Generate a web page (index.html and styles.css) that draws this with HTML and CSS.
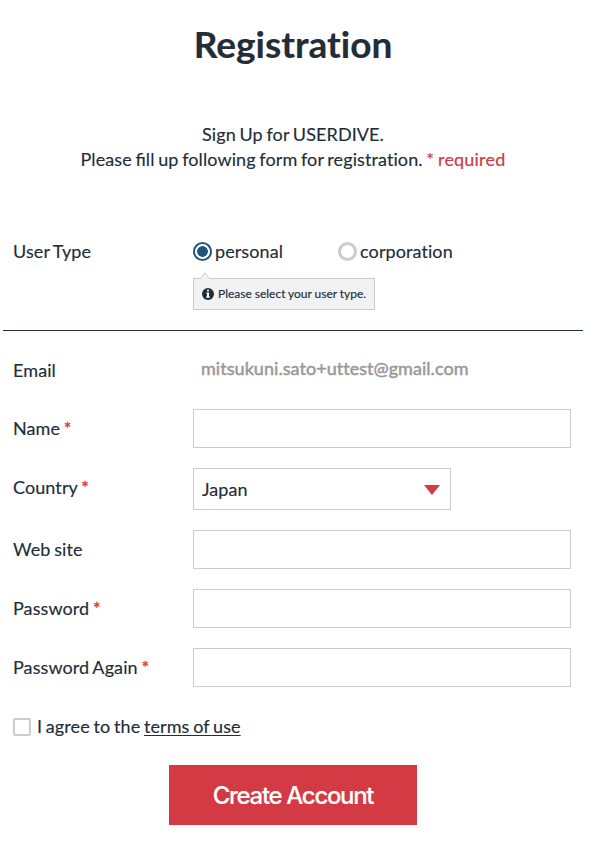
FILE: index.html
```html
<!DOCTYPE html>
<html lang="en">
<head>
<meta charset="utf-8">
<title>Registration</title>
<link rel="stylesheet" href="styles.css">
</head>
<body>
<main class="page">
  <h1 class="title">Registration</h1>
  <p class="intro">Sign Up for USERDIVE.<br>Please <span class="ligature">fi</span>ll up following form for registration. <span class="required note">* required</span></p>
  <form class="form">
    <div class="type-row">
      <span class="label">User Type</span>
      <div class="type-field">
        <div class="radios">
          <label class="choice"><input class="radio" type="radio" name="type" checked><span>personal</span></label>
          <label class="choice"><input class="radio" type="radio" name="type"><span>corporation</span></label>
        </div>
        <div class="hint">
          <svg class="hint-arrow" width="10" height="7" viewBox="0 0 10 7"><path d="M0.5 7L5 .8L9.500 7" fill="#f0f2f3" stroke="#ccc"/></svg>
          <svg class="info" width="12" height="12" viewBox="0 0 12 12"><circle cx="6" cy="6" r="6" fill="#222d38"/><path d="M5 1.700h2v1.600H5zM4.300 4.500H7v4h.8v1.200H4.200V8.500H5V5.700h-.7z" fill="#fff"/></svg>
          <span class="hint-text">Please select your user type.</span>
        </div>
      </div>
    </div>
    <div class="fields">
      <div class="row email-row"><span class="label">Email</span><span class="email">mitsukuni.sato+uttest@gmail.com</span></div>
      <div class="row"><label class="label" for="name">Name <span class="required">*</span></label><input class="input" id="name" type="text"></div>
      <div class="row country-row"><span class="label">Country <span class="required">*</span></span>
        <div class="select"><span>Japan</span><svg class="caret" width="16" height="10" viewBox="0 0 16 10"><path d="M0 0h16L8 10z" fill="#d43a43"/></svg></div></div>
      <div class="row"><label class="label" for="site">Web site</label><input class="input" id="site" type="text"></div>
      <div class="row"><label class="label" for="pw">Password <span class="required">*</span></label><input class="input" id="pw" type="password"></div>
      <div class="row"><label class="label" for="pw2">Password Again <span class="required">*</span></label><input class="input" id="pw2" type="password"></div>
    </div>
    <label class="agree"><input class="checkbox" type="checkbox"><span>I agree to the <a class="terms" href="#">terms of use</a></span></label>
    <button class="submit" type="button">Create Account</button>
  </form>
</main>
</body>
</html>
```
FILE: styles.css
```css
* { box-sizing: border-box; }
body {
  margin: 0;
  background: #fff;
  color: #222d38;
  font: 18px/25px Lato, "Open Sans", sans-serif;
  font-variant-ligatures: none;
  letter-spacing: 0.09px;
  word-spacing: -1px;
  -webkit-text-stroke: 0.15px currentColor;
}
.page { width: 580px; margin-left: 3px; padding-top: 19px; }
.title { margin: 0; font-size: 37px; line-height: 50px; font-weight: 700; text-align: center; letter-spacing: 0; }
.intro { margin: 53px 0 0; text-align: center; }
.ligature { font-variant-ligatures: common-ligatures; letter-spacing: 0; }
.required { color: #d43a43; -webkit-text-stroke-width: 0.4px; }
.note { letter-spacing: 0.2px; -webkit-text-stroke-width: 0.2px; }
.type-row { display: flex; height: 92px; margin-top: 67px; padding-left: 10px; border-bottom: 1px solid #222d38; }
.label { width: 180px; flex: none; }
.radios { display: flex; gap: 55px; }
.choice { display: flex; align-items: center; gap: 3px; white-space: nowrap; }
.radio { appearance: none; flex: none; width: 19px; height: 19px; margin: 0; border: 3px solid #ccc; border-radius: 50%; }
.radio:checked { border: 2px solid #22557c; background: radial-gradient(circle, #22557c 5px, #fff 5.6px); }
.hint { position: relative; display: flex; align-items: center; gap: 4px; width: 182px; height: 32px; margin-top: 14px; padding-left: 8px; border: 1px solid #ccc; background: #f0f2f3; font-size: 12px; letter-spacing: 0; word-spacing: -0.2px; white-space: nowrap; }
.hint-text { padding-bottom: 1px; }
.hint-arrow { position: absolute; left: 6px; top: -7px; }
.fields { display: flex; flex-direction: column; gap: 20px; padding: 27px 0 0 10px; }
.row { display: flex; align-items: center; height: 39px; }
.email-row { height: 31px; align-items: flex-start; }
.email { margin: -2px 0 0 8px; color: #999; letter-spacing: 0.05px; -webkit-text-stroke-width: 0.5px; }
.country-row { height: 42px; }
.country-row .label { padding-bottom: 4px; }
.input { width: 378px; height: 39px; padding: 0 8px; border: 1px solid #ccc; font: inherit; color: inherit; }
.select { display: flex; align-items: center; justify-content: space-between; width: 258px; height: 42px; padding: 0 10px 0 8px; border: 1px solid #ccc; }
.caret { margin-top: 1px; }
.agree { display: flex; align-items: center; gap: 6px; width: max-content; margin: 27px 0 0 10px; }
.checkbox { appearance: none; width: 18px; height: 18px; margin: 0; border: 2px solid #ccc; border-radius: 2px; }
.terms { color: inherit; text-decoration: underline 1px; text-underline-offset: 2px; text-decoration-skip-ink: none; }
.submit { display: block; width: 248px; height: 60px; margin: 26px auto 0; padding: 2px 0 0; border: 0; background: #d43a43; color: #fff; font: 500 24px/30px Inter, sans-serif; letter-spacing: -1.32px; word-spacing: 0; }
```
